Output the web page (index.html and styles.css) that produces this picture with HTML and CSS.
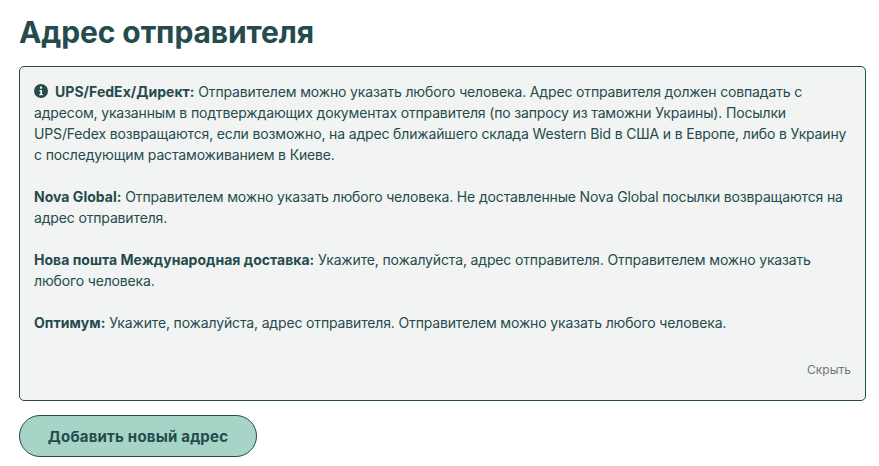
FILE: index.html
```html
<!DOCTYPE html>
<html lang="ru">
<head>
<meta charset="utf-8">
<title>Адрес отправителя</title>
<link rel="stylesheet" href="styles.css">
</head>
<body>
<main class="page">
  <h1 class="title">Адрес отправителя</h1>
  <section class="notice">
    <p class="para"><svg class="info" viewBox="0 0 14 14" aria-hidden="true"><circle cx="7" cy="7" r="7" fill="#254b4c"/><rect x="5.9" y="2.6" width="2.2" height="2.1" rx=".5" fill="#f2f4f3"/><path d="M5.4 5.9h2.7v4h.8v1.4H5.3V9.9h.9V7.3h-.8z" fill="#f2f4f3"/></svg><b>UPS/FedEx/Директ:</b> Отправителем можно указать любого человека. Адрес отправителя должен совпадать с адресом, указанным в подтверждающих документах отправителя (по запросу из таможни Украины). Посылки UPS/Fedex возвращаются, если возможно, на адрес ближайшего склада Western Bid в США и в Европе, либо в Украину с последующим растаможиванием в Киеве.</p>
    <p class="para"><b>Nova Global:</b> Отправителем можно указать любого человека. Не доставленные Nova Global посылки возвращаются на адрес отправителя.</p>
    <p class="para"><b>Нова пошта Международная доставка:</b> Укажите, пожалуйста, адрес отправителя. Отправителем можно указать любого человека.</p>
    <p class="para"><b>Оптимум:</b> Укажите, пожалуйста, адрес отправителя. Отправителем можно указать любого человека.</p>
    <div class="hide-row"><a class="hide" href="#">Скрыть</a></div>
  </section>
  <button class="add" type="button">Добавить новый адрес</button>
</main>
</body>
</html>
```

FILE: styles.css
```css
* { box-sizing: border-box; }
html, body { margin: 0; padding: 0; background: #fff; }
body { font-family: Inter, "Liberation Sans", sans-serif; color: #254b4c; }
.page { padding: 13px 13px 0 19px; }
.title { margin: 0 0 15px; font-size: 30px; line-height: 38px; font-weight: 700; letter-spacing: -0.1px; color: #254b4c; }
.notice { height: 335px; padding: 14px 14px 0; background: #f2f4f3; border: 1px solid #254b4c; border-radius: 5px; font-size: 14px; line-height: 21px; letter-spacing: -0.15px; }
.para { margin: 0 0 21px; }
.para b { font-weight: 700; letter-spacing: 0.03px; }
.info { width: 14px; height: 14px; margin-right: 7px; vertical-align: -1px; }
.hide-row { display: flex; justify-content: flex-end; margin-top: 26px; }
.hide { color: #6f7678; font-size: 12px; line-height: 21px; letter-spacing: 0; text-decoration: none; }
.add { display: block; width: 238px; height: 42px; margin-top: 14px; padding: 1px 0 0; background: #a6d5c7; border: 1px solid #254b4c; border-radius: 21px; color: #254b4c; font: 700 15px/20px Inter, "Liberation Sans", sans-serif; letter-spacing: 0.2px; }
```
